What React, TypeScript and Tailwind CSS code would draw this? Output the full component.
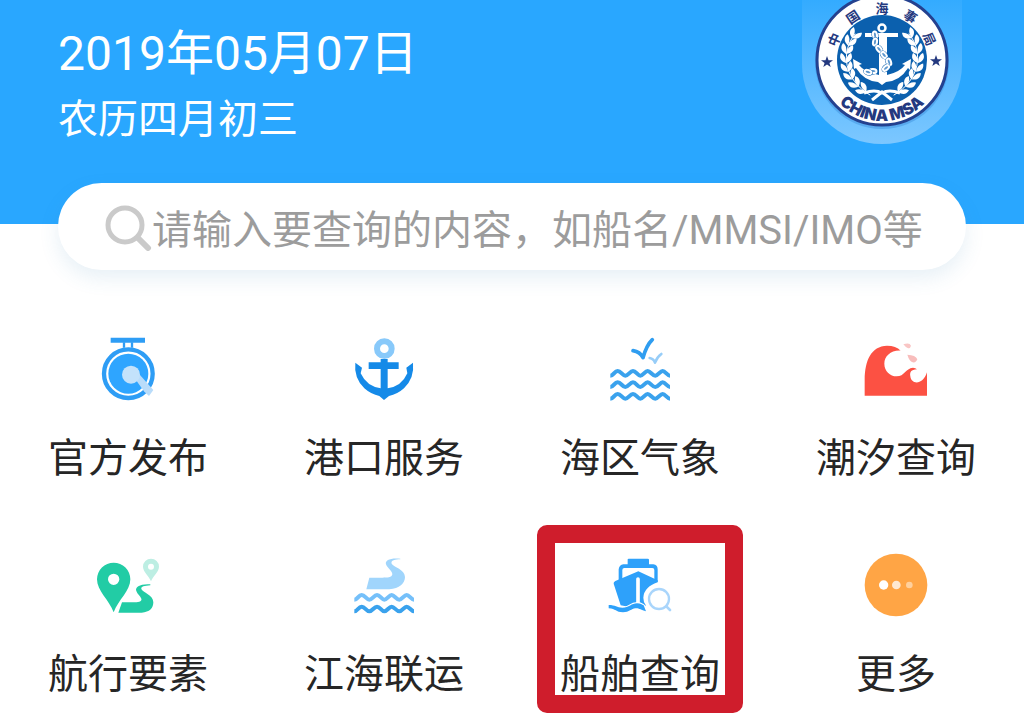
import type { ReactNode } from 'react';

const leaves = [
  [-27, -26, 35],
  [-32, -19, 25],
  [-35, -11, 12],
  [-36, -2, 0],
  [-35, 7, -15],
  [-32, 15, -28],
  [-27, 23, -42],
  [-20, 29, -55],
];

const LaurelBranch = () => (
  <g fill="#fff">
    <path d="M-27 -26 C-42 -8 -38 20 -12 35" fill="none" stroke="#fff" strokeLinecap="round" />
    {leaves.map(([x, y, r]) => (
      <g key={y} transform={`translate(${x} ${y}) rotate(${r})`}>
        <path d="M0 5 C-6 3 -7 -1 -5 -5 C-1 -3 0 1 0 5 Z" />
        <path d="M0 5 C6 3 7 -1 5 -5 C1 -3 0 1 0 5 Z" />
      </g>
    ))}
  </g>
);

const chainLinks = [
  [-7, -25, 80],
  [-7, -18, 100],
  [-3, -11, 50],
  [2, -5, 50],
  [7, 2, 70],
  [4, 8, 140],
  [-9, 11, 5],
  [-14, 12, 20],
];

const ringChars: [string, number][] = [
  ['中', -67],
  ['国', -34],
  ['海', 0],
  ['事', 33],
  ['局', 66],
];

const STAR = 'M0 -6 L1.5 -1.8 L6 -1.8 L2.4 0.9 L3.7 5 L0 2.5 L-3.7 5 L-2.4 0.9 L-6 -1.8 L-1.5 -1.8 Z';

const Logo = () => (
  <svg viewBox="0 0 160 144" className="w-40 h-36 shrink-0" role="img" aria-label="CHINA MSA">
    <defs>
      <linearGradient id="halo" x1="0" y1="0" x2="0" y2="1">
        <stop offset="0" stopColor="#33abff" />
        <stop offset="1" stopColor="#7cc7ff" />
      </linearGradient>
      <path id="ring-bottom" d="M20 61 A60 60 0 0 0 140 61" />
    </defs>
    <path d="M0 0 H160 V64 A80 80 0 0 1 0 64 Z" fill="url(#halo)" />
    <circle cx="80" cy="62" r="67" fill="#2a7fd0" opacity="0.35" />
    <circle cx="80" cy="60" r="65" fill="#fff" stroke="#24418f" strokeWidth="3" />
    <circle cx="80" cy="60" r="45" fill="#0b60ae" />
    <g fill="#24397f" fontFamily="'Noto Sans CJK SC', sans-serif" fontSize="13" fontWeight="700" textAnchor="middle">
      {ringChars.map(([char, angle]) => (
        <text key={char} transform={`translate(80 60) rotate(${angle})`} y="-47">
          {char}
        </text>
      ))}
    </g>
    <text fill="#24397f" fontFamily="Inter, 'Liberation Sans', sans-serif" fontSize="16" fontWeight="900" textAnchor="middle">
      <textPath href="#ring-bottom" startOffset="50%">
        CHINA MSA
      </textPath>
    </text>
    <path d={STAR} transform="translate(25 62)" fill="#24397f" />
    <path d={STAR} transform="translate(134 61)" fill="#24397f" />
    <g transform="translate(80 60)">
      <LaurelBranch />
      <g transform="scale(-1 1)">
        <LaurelBranch />
      </g>
      <path d="M-18 33 Q-7 29 0 33 Q7 29 18 33 M-10 40 L0 32 L10 40" fill="none" stroke="#fff" strokeWidth="3" />
      <circle cx="0" cy="-32" r="3.5" fill="none" stroke="#fff" strokeWidth="2.5" />
      <path d="M-17 -27 H16 V-23 H5 V15 Q18 12 23 5 L20 4 L29 -1 L28 10 L26 8 Q18 21 4 22 L0 25 L-4 22 Q-18 21 -26 8 L-28 9 L-29 -1 L-20 4 L-23 5 Q-18 12 -3 15 V-23 H-17 Z" fill="#fff" />
      {chainLinks.map(([x, y, r]) => (
        <g key={y} transform={`translate(${x} ${y}) rotate(${r})`}>
          <ellipse rx="5" ry="3.5" fill="#0b60ae" />
          <ellipse rx="3.5" ry="2" fill="#5d97cd" stroke="#fff" strokeWidth="2" />
        </g>
      ))}
    </g>
  </svg>
);

const Icon = ({ viewBox, children }: { viewBox: string; children: ReactNode }) => (
  <svg viewBox={viewBox} className="size-16 overflow-visible" fill="none" aria-hidden="true">
    {children}
  </svg>
);

const Wave = ({ y, color }: { y: number; color: string }) => (
  <path
    transform={`translate(31 ${y})`}
    d="M0 0 c10 0 12 -14 22 -14 s14 14 23 14 s14 -14 23 -14 s14 14 22 14 s14 -14 22 -14 s14 14 23 14 s14 -14 22 -14 s14 14 22 14"
    stroke={color}
    strokeWidth="12"
  />
);

const BellIcon = () => (
  <Icon viewBox="18 36 192 192">
    <path d="M62 38 H165 V53 H62 Z" fill="#2e9df5" />
    <path d="M102 52 V68 M126 52 V68" stroke="#2e9df5" strokeWidth="7" />
    <circle cx="115" cy="146" r="73" stroke="#2e9df5" strokeWidth="13" />
    <circle cx="115" cy="146" r="60" fill="#2ea5ff" />
    <path d="M134 160 L148 148 L190 195 L177 213 L163 200 Z" fill="#b9dcfa" />
    <circle cx="123" cy="149" r="27" fill="#c3e2fb" />
  </Icon>
);

const AnchorIcon = () => (
  <Icon viewBox="21 36 192 192">
    <circle cx="118" cy="71" r="22" stroke="#88c9fa" strokeWidth="18" />
    <path
      d="M107 102 H128 V112 H161 V132 H128 V190 Q170 184 187 145 L184 128 L204 113 Q209 158 177 190 Q157 208 132 213 L117 225 L103 213 Q78 208 58 190 Q26 158 31 113 L51 128 L47 145 Q65 184 107 190 V132 H71 V112 H107 Z"
      fill="#158ae8"
    />
  </Icon>
);

const SeaIcon = () => (
  <Icon viewBox="24 36 192 192">
    <path d="M99 77 Q120 80 129 98 Q140 60 157 44" stroke="#2f9df0" strokeWidth="11" strokeLinecap="round" strokeLinejoin="round" />
    <path d="M149 99 Q161 101 165 113 Q171 96 184 87" stroke="#97cdf8" strokeWidth="8" strokeLinecap="round" strokeLinejoin="round" />
    <Wave y={152} color="#3aa2ed" />
    <Wave y={186} color="#3aa2ed" />
    <Wave y={221} color="#3aa2ed" />
  </Icon>
);

const TideIcon = () => (
  <Icon viewBox="27 36 192 192">
    <path
      d="M29 212 V163 C30 106 48 64 96 62 Q123 62 137 77 C108 75 88 94 88 116 C88 138 105 154 125 154 C149 154 151 130 174 128 Q181 128 186 133 C168 134 164 142 166 154 C169 180 204 181 216 142 V212 Z"
      fill="#fc5143"
    />
    <path d="M145 58 Q164 51 168 62 Q165 73 158 69 Q152 67 145 58 Z" fill="#f9c6c5" />
    <path d="M157 89 Q182 90 187 103 Q183 114 173 112 Q163 109 157 89 Z" fill="#f8bdbc" />
  </Icon>
);

const RouteIcon = () => (
  <Icon viewBox="18 24 192 192">
    <path fillRule="evenodd" d="M71 202 C57 164 21 138 21 103 A50 50 0 0 1 121 103 C121 138 85 164 71 202 Z M71 86 A17 17 0 1 0 71 120 A17 17 0 1 0 71 86 Z" fill="#22cca5" />
    <path fillRule="evenodd" d="M183 109 C177 93 159 80 159 65 A24 24 0 0 1 207 65 C207 80 189 93 183 109 Z M183 56 A9 9 0 1 0 183 74 A9 9 0 1 0 183 56 Z" fill="#bdeee3" />
    <path d="M181 118 C151 116 134 126 139 138 C142 148 151 153 154 161 C157 170 143 172 130 172 H96 L85 203 H155 C179 202 190 189 190 172 C190 149 158 143 154 132 C153 124 163 123 181 121 Z" fill="#22cca5" />
  </Icon>
);

const RiverIcon = () => (
  <Icon viewBox="24 24 192 192">
    <path d="M169 41 C140 38 122 45 126 58 C129 69 145 77 145 88 C144 98 129 98 115 98 H76 L67 133 H136 C166 131 183 115 183 96 C183 73 149 66 143 56 C139 46 154 43 169 43 Z" fill="#a0d5fc" />
    <Wave y={164} color="#75c0fa" />
    <Wave y={199} color="#3aa2ed" />
  </Icon>
);

const ShipIcon = () => (
  <Icon viewBox="24 24 192 192">
    <path d="M83 43 Q83 41 86 41 H143 Q147 41 147 44 V58 H160 Q173 60 173 73 V111 Q160 111 163 106 V75 Q163 69 157 69 H73 Q67 69 67 75 V106 H56 V73 Q58 59 70 58 H83 Z" fill="#2ea1fa" />
    <path d="M115 79 L173 106 V112 Q132 126 130 158 Q130 171 137 180 V198 Q119 191 108 187 L77 184 L62 181 L41 116 Q40 111 46 108 Z" fill="#2ea1fa" />
    <path d="M114 102 V172" stroke="#fff" strokeWidth="11" strokeLinecap="round" />
    <path d="M28 186 C46 187 49 195 69 195 C91 195 91 180 112 180 C124 180 130 185 137 198" stroke="#fff" strokeWidth="18" />
    <path d="M26 180 C47 180 50 188 67 188 C88 188 94 175 111 175 C122 176 126 179 131 181 L138 199 C122 195 118 189 106 190 C94 191 88 202 69 202 C47 202 48 191 26 190 Z" fill="#2ea1fa" />
    <circle cx="177" cy="162" r="30" stroke="#a9d5fb" strokeWidth="7" />
    <path d="M199 184 L210 195" stroke="#a9d5fb" strokeWidth="8" strokeLinecap="round" />
  </Icon>
);

const MoreIcon = () => (
  <Icon viewBox="27 24 192 192">
    <circle cx="123" cy="120" r="94" fill="#ffa545" />
    <circle cx="86" cy="120" r="14" fill="#fff" />
    <circle cx="124" cy="120" r="13" fill="#ffe9d2" />
    <circle cx="163" cy="120" r="10" fill="#ffd09d" />
  </Icon>
);

const menuItems = [
  { icon: BellIcon, label: '官方发布' },
  { icon: AnchorIcon, label: '港口服务' },
  { icon: SeaIcon, label: '海区气象' },
  { icon: TideIcon, label: '潮汐查询' },
  { icon: RouteIcon, label: '航行要素' },
  { icon: RiverIcon, label: '江海联运' },
  { icon: ShipIcon, label: '船舶查询', highlighted: true },
  { icon: MoreIcon, label: '更多' },
];

const App = () => (
  <div className="bg-white text-[#262626] font-[Roboto,'Noto_Sans_CJK_SC',sans-serif]">
    <header className="flex items-start justify-between h-56 pl-[58px] pr-[62px] bg-[#29a7ff] text-white">
      <div className="pt-[26px]">
        <h1 className="text-[48px] leading-[56px]">2019年05月07日</h1>
        <p className="mt-[14px] text-[40px] leading-[48px]">农历四月初三</p>
      </div>
      <Logo />
    </header>

    <label className="relative flex items-center h-[87px] -mt-[41px] mx-[58px] pl-[46px] pr-10 rounded-full bg-white shadow-[0_8px_20px_rgba(60,130,180,0.12)]">
      <svg viewBox="0 0 48 48" className="size-12 shrink-0" fill="none" stroke="#cacaca" aria-hidden="true">
        <circle cx="21" cy="22" r="17" strokeWidth="5" />
        <path d="M34 35 L44 45" strokeWidth="6" strokeLinecap="round" />
      </svg>
      <input
        type="text"
        aria-label="查询"
        placeholder="请输入要查询的内容，如船名/MMSI/IMO等"
        className="flex-1 min-w-0 h-16 pt-2 text-[40px] leading-[56px] outline-none placeholder:text-[#9c9c9c]"
      />
    </label>

    <nav className="grid grid-cols-4 gap-y-[70px] pt-[67px] pb-5">
      {menuItems.map((item) => (
        <button key={item.label} type="button" className="relative flex flex-col items-center gap-[34px]">
          <item.icon />
          <span className="text-[40px] leading-[48px]">{item.label}</span>
          {item.highlighted && (
            <span className="absolute -top-7 -bottom-[14px] inset-x-[25px] rounded-[10px] border-[18px] border-[#cf1d2c]" />
          )}
        </button>
      ))}
    </nav>
  </div>
);

export default App;
